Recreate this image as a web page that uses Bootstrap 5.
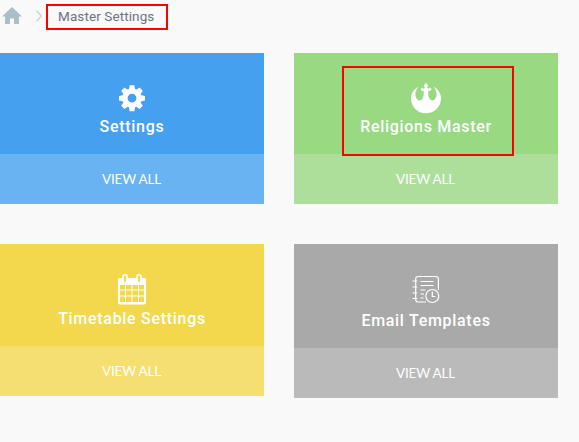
<!DOCTYPE html>
<html lang="en">
<head>
<meta charset="utf-8">
<meta name="viewport" content="width=device-width, initial-scale=1">
<title>Master Settings</title>
<link rel="stylesheet" href="https://cdn.jsdelivr.net/npm/bootstrap@5.3.0/dist/css/bootstrap.min.css">
<style>
body{background:#f9f9f9;font-family:Lato,"Liberation Sans",sans-serif;overflow:hidden}
.crumbs{height:53px;padding:4px 0 0 2px}
.crumbs .home{margin-top:3px}
.crumbs .sep{margin:6px 0 0 14px}
.crumb-box{width:122px;height:26px;margin-left:4px;padding-left:10px;border:2px solid #f00;color:#6a7482;font:13.500px/21px Roboto,sans-serif;letter-spacing:.1px;white-space:nowrap}
.tiles{display:grid;grid-template-columns:264px 264px;column-gap:30px;row-gap:40px;align-items:start}
.tile{color:#fff}
.tile-head{height:101px;padding-top:29px}
.tile-head svg{display:block}
.tile-title{font-family:Roboto,sans-serif;font-size:16px;font-weight:500;line-height:22px;letter-spacing:.7px;white-space:nowrap}
.tile-link{height:50px;padding-right:1px;font-size:13.500px;letter-spacing:-.2px;color:#fff;white-space:nowrap}
.blue{background:#45a0ef}.blue .tile-link{background:#69b3f3}
.green{background:#98d982}.green .tile-link{background:#addf9b}
.yellow{background:#f3d84d}.yellow .tile-link{background:#f5df71}
.gray{background:#a9a9a9}.gray .tile-link{background:#bababa}
.yellow .tile-head{height:102px}.gray .tile-head{height:104px}
.outline-box{left:48px;top:13px;width:172px;height:90px;border:2px solid #f00}
</style>
</head>
<body>
<nav class="crumbs d-flex align-items-start" aria-label="breadcrumb">
<svg class="home" width="20" height="17" viewBox="0 0 20 17"><path fill="#a7c0ca" d="M10 0l10 9.600h-3V17h-5v-5.500H8V17H3V9.600H0z"/></svg>
<svg class="sep" width="6" height="12" viewBox="0 0 6 12"><path fill="none" stroke="#cfd3d5" stroke-width="1.500" d="M.5.700L5.200 6 .5 11.300"/></svg>
<div class="crumb-box">Master Settings</div>
</nav>
<main class="tiles">
<section class="tile blue">
<div class="tile-head d-flex flex-column align-items-center">
<svg width="32" height="34" viewBox="0 0 32 34"><g transform="translate(16 16.200)" fill="#fff"><path fill-rule="evenodd" d="M-9.700 0a9.700 9.700 0 1 0 19.400 0a9.700 9.700 0 1 0-19.400 0M-4.400 0a4.400 4.400 0 1 0 8.800 0a4.400 4.400 0 1 0-8.800 0"/><g id="teeth"><path id="tooth" d="M-3.200-8.500L-2.300-13H2.300L3.200-8.500z"/><use href="#tooth" transform="rotate(45)"/><use href="#tooth" transform="rotate(90)"/><use href="#tooth" transform="rotate(135)"/></g><use href="#teeth" transform="rotate(180)"/></g></svg>
<div class="tile-title">Settings</div>
</div>
<a class="tile-link d-flex align-items-center justify-content-center text-decoration-none" href="#">VIEW ALL</a>
</section>
<section class="tile green position-relative">
<div class="tile-head d-flex flex-column align-items-center">
<svg width="32" height="34" viewBox="0 0 32 34"><path fill="#fff" d="M16 .8l2.200 2.600-1 2.300 1.300 1 1.600-1.300 1.500 1.800-1.800 2-1.400-.6c-.5 4 .3 7.200 1.500 8.700 1.400 1.600 3.600 1.500 5-.1 2.700-3.200 2.200-8.500-1.600-12.700 4.700 2.500 7.700 6.700 7.700 11.700C31 24.800 24.500 31.300 16 31.300S1 24.800 1 16.200C1 11.200 4 7 8.700 4.500c-3.800 4.200-4.300 9.500-1.600 12.700 1.400 1.600 3.600 1.700 5 .1 1.200-1.500 2-4.700 1.500-8.700l-1.400.6-1.800-2 1.500-1.800 1.600 1.300 1.300-1-1-2.300z"/></svg>
<div class="tile-title">Religions Master</div>
</div>
<a class="tile-link d-flex align-items-center justify-content-center text-decoration-none" href="#">VIEW ALL</a>
<div class="outline-box position-absolute"></div>
</section>
<section class="tile yellow">
<div class="tile-head d-flex flex-column align-items-center">
<svg width="28" height="35" viewBox="0 0 28 35"><path fill="#fff" fill-rule="evenodd" d="M2 5h2V4a3 3 0 0 1 6 0v1h8V4a3 3 0 0 1 6 0v1h2a2 2 0 0 1 2 2v22.500a2 2 0 0 1-2 2H2a2 2 0 0 1-2-2V7a2 2 0 0 1 2-2zM7 2.500a1 1 0 0 0-1 1V8a1 1 0 0 0 2 0V3.500a1 1 0 0 0-1-1zM21 2.500a1 1 0 0 0-1 1V8a1 1 0 0 0 2 0V3.500a1 1 0 0 0-1-1zM2 12v4.500h5V12zM8 12v4.500h5.500V12zM14.500 12v4.500H20V12zM21 12v4.500h5V12zM2 17.500v5h5v-5zM8 17.500v5h5.500v-5zM14.500 17.500v5H20v-5zM21 17.500v5h5v-5zM2 23.500V29h5v-5.500zM8 23.500V29h5.500v-5.500zM14.500 23.500V29H20v-5.500zM21 23.500V29h5v-5.500z"/></svg>
<div class="tile-title">Timetable Settings</div>
</div>
<a class="tile-link d-flex align-items-center justify-content-center text-decoration-none" href="#">VIEW ALL</a>
</section>
<section class="tile gray">
<div class="tile-head d-flex flex-column align-items-center">
<svg width="28" height="37" viewBox="0 0 28 37"><g fill="none" stroke="#fff" stroke-width="1.200"><path d="M26.400 17V6a2.500 2.500 0 0 0-2.500-2.500H6.200A2.500 2.500 0 0 0 3.700 6v20.500a2.500 2.500 0 0 0 2.500 2.500H14M.5 8h4.700M.5 14h4.700M.5 20h4.700M.5 25.500h4.700M8.500 8.500h13M8.500 12.500h13M8.500 17h5M8.500 21h3.500M8.500 25h3"/><circle cx="20.300" cy="23" r="6.500"/><path d="M20.300 18.500V23.500h3"/></g></svg>
<div class="tile-title">Email Templates</div>
</div>
<a class="tile-link d-flex align-items-center justify-content-center text-decoration-none" href="#">VIEW ALL</a>
</section>
</main>
<script src="https://cdn.jsdelivr.net/npm/bootstrap@5.3.0/dist/js/bootstrap.bundle.min.js"></script>
</body>
</html>
